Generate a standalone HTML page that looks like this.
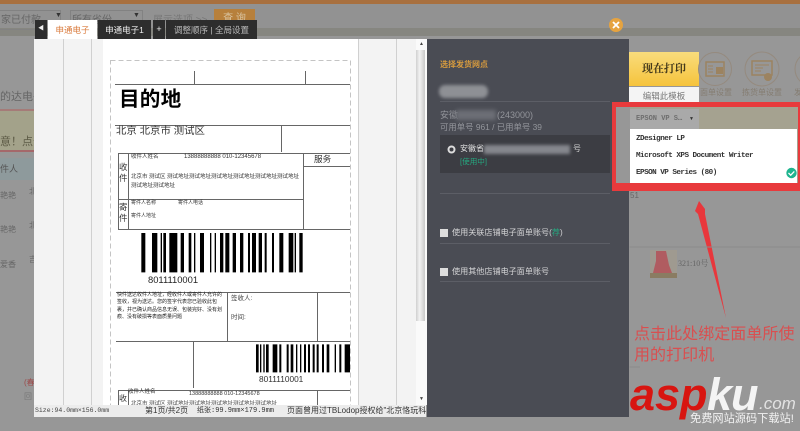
<!DOCTYPE html>
<html><head><meta charset="utf-8">
<style>
html,body{margin:0;padding:0;background:#979797}
#p{position:relative;width:800px;height:431px;overflow:hidden;background:#979797;font-family:"Liberation Sans","Noto Sans CJK SC",sans-serif;filter:blur(.35px)}
#p div{position:absolute;white-space:nowrap}
svg{position:absolute;left:0;top:0}
.m{font-family:"Liberation Mono","Noto Sans CJK SC",monospace}
.s{font-family:"Liberation Serif","Noto Serif CJK SC",serif}
.k{color:#333}
</style></head><body><div id="p">
<div style="left:0;top:0;width:800px;height:4px;background:#a8703f"></div>
<div style="left:0;top:4px;width:800px;height:24px;background:#929292"></div>
<div style="left:0;top:28px;width:800px;height:8px;background:#868680"></div>
<div style="left:-2px;top:10px;width:63px;height:20px;border:1px solid #828282;box-sizing:border-box"></div>
<div style="left:70px;top:10px;width:73px;height:20px;border:1px solid #828282;box-sizing:border-box"></div>
<div style="left:1px;top:11px;font-size:10px;color:#666">家已付款</div>
<div style="left:55px;top:12px;font-size:7px;color:#333">▼</div>
<div style="left:72px;top:11px;font-size:10px;color:#666">所有省份</div>
<div style="left:133px;top:12px;font-size:7px;color:#333">▼</div>
<div style="left:153px;top:11px;font-size:10px;color:#777">展示选项 &gt;&gt;</div>
<div style="left:214px;top:9px;width:41px;height:20px;background:#b7803c;color:#d9c3a0;font-size:10px;line-height:20px;text-align:center">查 询</div>

<div style="left:0;top:88px;font-size:11px;color:#666">的达电子</div>
<div style="left:0;top:109px;width:34px;height:2px;background:#a57b78"></div>
<div style="left:0;top:111px;width:34px;height:39px;background:#a3a28a"></div>
<div style="left:0;top:150px;width:34px;height:2px;background:#a5686a"></div>
<div style="left:0;top:133px;font-size:11px;color:#5c5a45">意！点击</div>
<div style="left:0;top:158px;width:34px;height:22px;background:#8e9a9c"></div>
<div style="left:0;top:162px;font-size:9px;color:#555">件人</div>
<div style="left:0;top:190px;font-size:8px;color:#666">艳艳</div>
<div style="left:29px;top:186px;font-size:8px;color:#666">北</div>
<div style="left:0;top:224px;font-size:8px;color:#666">艳艳</div>
<div style="left:29px;top:220px;font-size:8px;color:#666">北</div>
<div style="left:0;top:259px;font-size:8px;color:#666">爱香</div>
<div style="left:29px;top:254px;font-size:8px;color:#666">吉</div>
<div style="left:24px;top:377px;font-size:8px;color:#9c4a4a">(春</div>
<div style="left:24px;top:391px;font-size:8px;color:#777">回</div>

<!-- modal body -->
<div style="left:34px;top:39px;width:392px;height:378px;background:#f3f3f3"></div>
<div style="left:103px;top:39px;width:255px;height:366px;background:#fff"></div>
<div style="left:416px;top:39px;width:11px;height:366px;background:#fafafa"></div>
<div style="left:416px;top:50px;width:9px;height:271px;background:linear-gradient(90deg,#d0d0d0,#f2f2f2 40%,#c9c9c9)"></div>
<div style="left:419px;top:41px;font-size:5px;color:#444">▲</div>
<div style="left:419px;top:396px;font-size:5px;color:#444">▼</div>

<svg width="800" height="431" viewBox="0 0 800 431">
<g stroke="#d0d0d0" stroke-width="1"><path d="M63.5 39V405M91.5 39V405M358.5 39V405M396.5 39V405"/></g>
<rect x="110.5" y="60.5" width="240" height="350" fill="none" stroke="#c4c4c4" stroke-dasharray="5 3"/>
<g stroke="#666" stroke-width="1" fill="none">
<path d="M194.5 71V84M305.5 71V84M115 84.5H350M115 125.5H350M281.5 126V152"/>
<path d="M350 153.5H118.5V229.5H350M128.5 153V229M303.5 153V229M118 199.5H303M303 166.5H350"/>
<path d="M116 292.5H350M227.5 292V341M317.5 292V341M116 341.5H350M193.5 341V388"/>
<path d="M350 390.5H118.5V405M128.5 390V405M317.5 390V405"/>
</g>
<g transform="translate(0,215) scale(.33333)" fill="#000">
<path d="M424 54h12v118h-12zM456 54h16v118h-16zM482 54h4v118h-4zM490 54h8v118h-8zM508 54h24v118h-24zM542 54h10v118h-10zM566 54h8v118h-8zM582 54h4v118h-4zM600 54h12v118h-12zM630 54h4v118h-4zM644 54h4v118h-4zM660 54h10v118h-10zM676 54h12v118h-12zM698 54h10v118h-10zM720 54h10v118h-10zM744 54h6v118h-6zM756 54h12v118h-12zM776 54h10v118h-10zM794 54h6v118h-6zM816 54h6v118h-6zM838 54h12v118h-12zM866 54h14v118h-14zM884 54h4v118h-4zM898 54h10v118h-10z"/>
<path d="M768 388h8v84h-8zM780 388h4v84h-4zM790 388h4v84h-4zM798 388h8v84h-8zM818 388h14v84h-14zM838 388h6v84h-6zM860 388h6v84h-6zM872 388h8v84h-8zM888 388h4v84h-4zM900 388h4v84h-4zM912 388h6v84h-6zM924 388h6v84h-6zM938 388h6v84h-6zM950 388h6v84h-6zM966 388h6v84h-6zM980 388h8v84h-8zM1004 388h4v84h-4zM1018 388h6v84h-6zM1034 388h16v84h-16z"/>
</g>
</svg>

<div style="left:119px;top:86px;font-size:20.6px;line-height:27px;font-weight:700;color:#000;letter-spacing:.2px">目的地</div>
<div style="left:116px;top:125px;font-size:10.4px;line-height:14px;color:#333">北京 北京市 测试区</div>
<div style="left:119px;top:162px;font-size:8.5px;line-height:11px;color:#333;white-space:normal;width:9px">收件</div>
<div style="left:119px;top:202px;font-size:8.5px;line-height:11px;color:#333;white-space:normal;width:9px">寄件</div>
<div style="left:131px;top:153px;font-size:5.5px;line-height:8px;color:#333">收件人姓名</div>
<div style="left:184px;top:153px;font-size:6px;line-height:8px;color:#333">13888888888 010-12345678</div>
<div style="left:131px;top:171px;font-size:5.5px;line-height:9px;top:173px;color:#333;white-space:normal;width:170px">北京市 测试区 测试地址测试地址测试地址测试地址测试地址测试地址测试地址测试地址</div>
<div style="left:131px;top:199px;font-size:5px;line-height:8px;color:#333">寄件人名称</div>
<div style="left:178px;top:199px;font-size:5px;line-height:8px;color:#333">寄件人电话</div>
<div style="left:131px;top:212px;font-size:5px;line-height:8px;color:#333">寄件人地址</div>
<div style="left:314px;top:153px;font-size:8.6px;line-height:13px;color:#333">服务</div>
<div style="left:148px;top:273px;font-size:9.4px;line-height:13px;color:#222">8011110001</div>
<div style="left:117px;top:291.5px;font-size:5px;line-height:7.5px;color:#222;white-space:normal;width:109px">快件送达收件人地址，经收件人或寄件人允许的签收，视为送达。您的签字代表您已验收此包裹，并已确认商品信息无误、包装完好、没有划痕、没有破损等表面质量问题</div>
<div style="left:231px;top:294px;font-size:6.5px;line-height:9px;color:#444">签收人:</div>
<div style="left:231px;top:313px;font-size:6.5px;line-height:9px;color:#444">时间:</div>
<div style="left:259px;top:373px;font-size:8.3px;line-height:12px;color:#333">8011110001</div>
<div style="left:128px;top:388px;font-size:5.5px;line-height:8px;color:#333">收件人姓名</div>
<div style="left:189px;top:390px;font-size:5.5px;line-height:8px;color:#333">13888888888 010-12345678</div>
<div style="left:119px;top:393px;font-size:8px;line-height:11px;color:#333">收</div>
<div style="left:131px;top:401px;font-size:5.5px;line-height:6px;color:#444">北京市 测试区 测试地址测试地址测试地址测试地址测试地址</div>

<!-- status bar -->
<div style="left:34px;top:405px;width:392px;height:12px;background:#ececec;overflow:hidden">
<div class="m" style="left:1px;top:1px;font-size:6.5px;line-height:10px;color:#444">Size:94.0mm×156.0mm</div>
<div style="left:111px;top:0;font-size:8px;line-height:12px;color:#333">第1页/共2页</div>
<div class="m" style="left:163px;top:0;font-size:7px;line-height:12px;color:#333">纸张:99.9mm×179.9mm</div>
<div style="left:253px;top:0;font-size:8px;line-height:12px;color:#333">页面曾用过TBLodop授权给"北京恪玩科</div>
</div>

<!-- tabs -->
<div style="left:35px;top:20px;width:12px;height:19px;background:#2d2d2d;color:#eee;font-size:6px;line-height:19px;text-align:center">◀</div>
<div style="left:48px;top:20px;width:49px;height:19px;background:#fff;color:#d9793a;font-size:8.5px;line-height:20px;text-align:center">申通电子</div>
<div style="left:98px;top:20px;width:53px;height:19px;background:#2d2d2d;color:#eee;font-size:8.5px;line-height:20px;text-align:center">申通电子1</div>
<div style="left:153px;top:20px;width:12px;height:19px;background:#2d2d2d;color:#eee;font-size:9px;line-height:18px;text-align:center">+</div>
<div style="left:166px;top:20px;width:91px;height:19px;background:#2d2d2d;color:#bbb;font-size:8.5px;line-height:20px;text-align:center">调整顺序 | 全局设置</div>

<svg width="800" height="431"><circle cx="616" cy="25" r="7" fill="#e6a33f"/><path d="M613 22l6 6M619 22l-6 6" stroke="#fff" stroke-width="1.8"/></svg>

<!-- dark panel -->
<div style="left:427px;top:39px;width:202px;height:378px;background:#4a4c54"></div>
<div style="left:440px;top:59px;font-size:8px;line-height:11px;font-weight:700;color:#d59a3f">选择发货网点</div>
<div style="left:439px;top:85px;width:49px;height:13px;border-radius:6px;background:#8e9095;filter:blur(1.5px)"></div>
<div style="left:440px;top:101px;width:170px;height:1px;background:#5c5e66"></div>
<div style="left:440px;top:109px;font-size:9px;line-height:12px;color:#93959b">安徽</div>
<div style="left:456px;top:110px;width:40px;height:10px;background:#6d6f76;filter:blur(2px)"></div>
<div style="left:497px;top:109px;font-size:9px;line-height:12px;color:#93959b">(243000)</div>
<div style="left:440px;top:121px;font-size:8.4px;line-height:12px;color:#93959b">可用单号 961 / 已用单号 39</div>
<div style="left:440px;top:135px;width:170px;height:38px;background:#3c3d43"></div>
<svg width="800" height="431"><circle cx="451.5" cy="149.5" r="3" fill="none" stroke="#ddd" stroke-width="2"/></svg>
<div style="left:460px;top:143px;font-size:8px;line-height:12px;color:#e2e2e2">安徽省</div>
<div style="left:484px;top:145px;width:86px;height:9px;background:#85878d;filter:blur(1.5px)"></div>
<div style="left:573px;top:143px;font-size:8px;line-height:12px;color:#d5d5d5">号</div>
<div style="left:460px;top:156px;font-size:7.6px;line-height:11px;color:#25a77f">[使用中]</div>
<div style="left:440px;top:193px;width:170px;height:1px;background:#5c5e66"></div>
<div style="left:440px;top:229px;width:8px;height:8px;background:#ddd"></div>
<div style="left:452px;top:227px;font-size:8.1px;line-height:12px;color:#d4d4d6">使用关联店铺电子面单账号(<span style="color:#25a77f">荐</span>)</div>
<div style="left:440px;top:243px;width:170px;height:1px;background:#5c5e66"></div>
<div style="left:440px;top:268px;width:8px;height:8px;background:#ddd"></div>
<div style="left:452px;top:266px;font-size:8.1px;line-height:12px;color:#d4d4d6">使用其他店铺电子面单账号</div>
<div style="left:440px;top:281px;width:170px;height:1px;background:#5c5e66"></div>

<!-- right -->
<div style="left:629px;top:52px;width:70px;height:34px;background:linear-gradient(#f8dc7c,#f6c33c);color:#443a1c;font-size:11px;font-weight:700;line-height:34px;text-align:center" class="s">现在打印</div>
<div style="left:629px;top:87px;width:70px;height:20px;background:#f4f4f4;color:#777;font-size:8.5px;line-height:19px;text-align:center">编辑此模板</div>
<svg width="800" height="431">
<g fill="none" stroke="#958a7e" stroke-width="1"><circle cx="715" cy="69" r="16.5"/><circle cx="762" cy="69" r="17"/><circle cx="812" cy="69" r="17"/></g>
<g fill="none" stroke="#9c8360" stroke-width="1.5"><rect x="706" y="62" width="18" height="14"/><rect x="752" y="61" width="20" height="14"/></g>
<rect x="716" y="67" width="7" height="7" fill="#9c8360"/><path d="M708 66h5M708 69h5M708 72h5M755 65h14M755 68h8M755 71h6" stroke="#9c8360"/><circle cx="768" cy="77" r="4" fill="#9c8360"/>
</svg>
<div style="left:700px;top:87px;font-size:8px;line-height:11px;color:#857d72">面单设置</div>
<div style="left:742px;top:87px;font-size:8px;line-height:11px;color:#857d72">拣货单设置</div>
<div style="left:794px;top:87px;font-size:8px;line-height:11px;color:#857d72">发</div>

<div style="left:616px;top:107px;width:182px;height:76px;background:#a5a290"></div>
<div style="left:616px;top:107px;width:14px;height:76px;background:#979797"></div>
<div style="left:630px;top:109px;width:69px;height:20px;background:#a9a9a9"></div>
<div class="m" style="left:636px;top:113px;font-size:7px;line-height:12px;color:#6e6e6e;font-weight:700">EPSON VP S…</div>
<div style="left:689px;top:115px;font-size:5px;line-height:8px;color:#333">▼</div>
<div style="left:630px;top:129px;width:167px;height:54px;background:#fff"></div>
<div class="m k" style="left:636px;top:133px;font-size:7.6px;line-height:12px;font-weight:700;letter-spacing:-.52px">ZDesigner LP</div>
<div class="m k" style="left:636px;top:150px;font-size:7.6px;line-height:12px;font-weight:700;letter-spacing:-.52px">Microsoft XPS Document Writer</div>
<div class="m k" style="left:636px;top:167px;font-size:7.6px;line-height:12px;font-weight:700;letter-spacing:-.52px">EPSON VP Series (80)</div>
<svg width="800" height="431">
<circle cx="791.5" cy="173" r="5.2" fill="#1fb58f"/><path d="M788.5 173l2.2 2.2 3.6-3.8" fill="none" stroke="#fff" stroke-width="1.3"/>
<path d="M612 102H800V107H616V183H798V107H800V191H612Z" fill="#e83a3c"/>
<path d="M699 201L695 211 698 214 726 318 705 214 705 209Z" fill="#e8373c"/>
<path d="M629.5 247H800M629.5 367H640" stroke="#8b8b8b"/>
</svg>
<div style="left:630px;top:190px;font-size:8px;line-height:11px;color:#666">51</div>
<svg width="800" height="431">
<rect x="650" y="250" width="27" height="28" fill="#9f9a90"/>
<path d="M656 251h10l3 14 3 8h-19l3-12z" fill="#b05c60"/><path d="M650 273h27v5h-27z" fill="#8a7c62"/>
</svg>
<div class="s" style="left:678px;top:258px;font-size:8px;line-height:11px;color:#666">321:10号</div>

<div style="left:634px;top:322px;font-size:16px;line-height:21px;color:#d94f50;letter-spacing:.05px;font-family:'Noto Sans CJK SC',sans-serif;white-space:normal;width:166px">点击此处绑定面单所使用的打印机</div>

<!-- logo -->
<div style="left:630px;top:368px;font-size:45px;line-height:54px;font-weight:700;font-style:italic;color:#d81510">asp</div>
<div style="left:707px;top:368px;font-size:45px;line-height:54px;font-weight:700;font-style:italic;color:#f4f4f4;letter-spacing:-1px">ku</div>
<div style="left:759px;top:394px;font-size:17px;line-height:20px;font-style:italic;color:#e2e2e2">.com</div>
<div style="left:690px;top:412px;font-size:11.2px;line-height:15px;color:#f2f2f2">免费网站源码下载站!</div>
</div></body></html>
